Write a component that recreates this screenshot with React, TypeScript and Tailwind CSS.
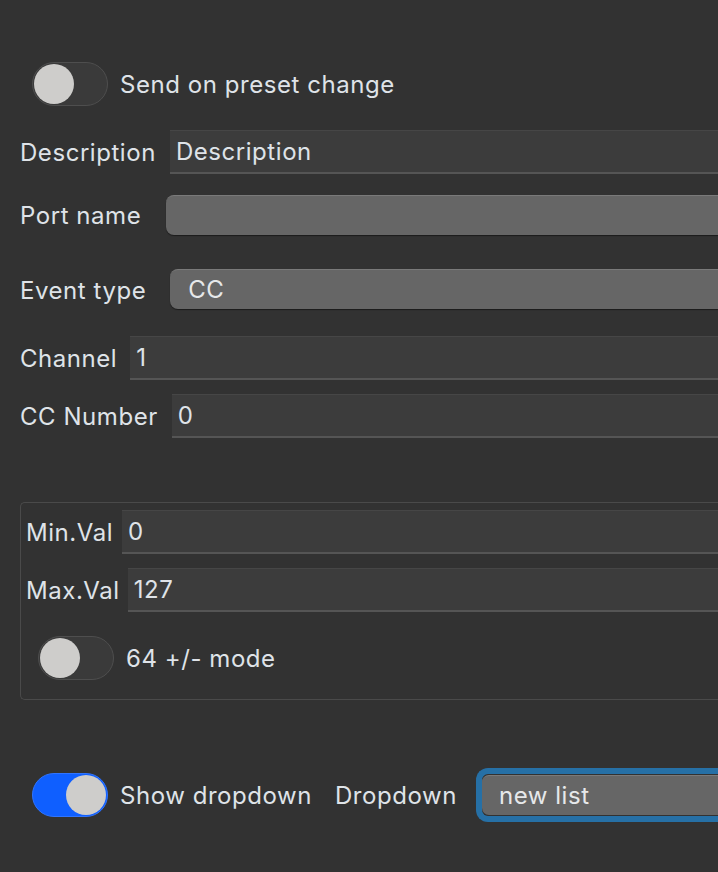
const font = { fontFamily: "Inter, 'Noto Sans', sans-serif" };

function Toggle({ on }: { on?: boolean }) {
  return (
    <div
      className={`flex h-[44px] w-[76px] shrink-0 items-center rounded-full border p-[1px] ${
        on ? "justify-end border-[#2f74ff] bg-[#0f5fff]" : "justify-start border-[#4e4e4e] bg-[#3a3a3a]"
      }`}
    >
      <div className="h-[40px] w-[40px] rounded-full bg-[#cecdcb]" />
    </div>
  );
}

function TextBox({ value, className = "" }: { value?: string; className?: string }) {
  return (
    <div
      className={`flex h-[44px] flex-1 items-center border-t border-t-[#464646] border-b-2 border-b-[#555] bg-[#3c3c3c] pl-[6px] pt-[1px] text-[#dfe3e8] ${className}`}
    >
      {value}
    </div>
  );
}

function Button({ value, className = "" }: { value?: string; className?: string }) {
  return (
    <div
      className={`flex h-[40px] flex-1 items-center rounded-l-[8px] border-t border-t-[#7a7a7a] bg-[#666666] pl-[18px] text-[#e6e8ea] shadow-[0_1px_1px_rgba(0,0,0,0.45)] ${className}`}
    >
      {value}
    </div>
  );
}

export default function App() {
  return (
    <div
      className="h-[872px] w-[718px] overflow-hidden bg-[#323232] text-[24px] leading-none tracking-[0.55px] text-[#dfe3e8]"
      style={font}
    >
      <div className="flex flex-col pt-[62px]">
        <div className="flex items-center gap-[12px] pl-[32px]">
          <Toggle />
          <span className="pt-[1px]">Send on preset change</span>
        </div>

        <div className="mt-[24px] flex items-center pl-[20px]">
          <span className="mr-[14px] pt-[1px]">Description</span>
          <TextBox value="Description" />
        </div>

        <div className="mt-[21px] flex items-center pl-[20px]">
          <span className="mr-[25px] pt-[1px]">Port name</span>
          <Button />
        </div>

        <div className="mt-[34px] flex items-center pl-[20px]">
          <span className="mr-[24px] pt-[3px]">Event type</span>
          <Button value="CC" />
        </div>

        <div className="mt-[27px] flex items-center pl-[20px]">
          <span className="mr-[13px] pt-[1px]">Channel</span>
          <TextBox value="1" />
        </div>

        <div className="mt-[14px] flex items-center pl-[20px]">
          <span className="mr-[14px] pt-[1px]">CC Number</span>
          <TextBox value="0" />
        </div>

        <div className="ml-[20px] mt-[64px] flex h-[198px] flex-col rounded-l-[5px] border border-r-0 border-[#4a4a4a] pl-[5px] pt-[7px]">
          <div className="flex items-center">
            <span className="mr-[9px] pt-[1px]">Min.Val</span>
            <TextBox value="0" />
          </div>
          <div className="mt-[14px] flex items-center">
            <span className="mr-[8px] pt-[1px]">Max.Val</span>
            <TextBox value="127" />
          </div>
          <div className="mt-[24px] flex items-center gap-[12px] pl-[12px]">
            <Toggle />
            <span className="pt-[1px]">64 +/- mode</span>
          </div>
        </div>

        <div className="mt-[68px] flex items-center pl-[32px]">
          <Toggle on />
          <span className="ml-[12px] pt-[1px]">Show dropdown</span>
          <span className="ml-[23px] pt-[1px]">Dropdown</span>
          <div className="ml-[19px] flex h-[54px] flex-1 items-center rounded-l-[12px] border-[6px] border-r-0 border-[#2670a6]">
            <div className="flex h-[40px] flex-1 items-center rounded-l-[7px] border-t border-t-[#7a7a7a] bg-[#666666] pl-[17px] text-[#e6e8ea]">
              new list
            </div>
          </div>
        </div>
      </div>
    </div>
  );
}
